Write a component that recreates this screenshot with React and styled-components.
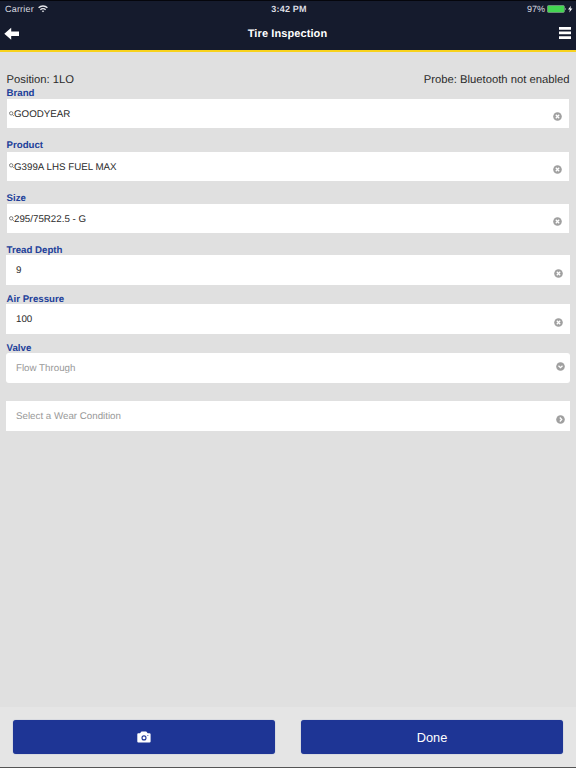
import React from "react";
import styled, { createGlobalStyle } from "styled-components";

const GlobalStyle = createGlobalStyle`
  * {
    box-sizing: border-box;
  }
  body {
    margin: 0;
    background-color: #e0e0e0;
    font-family: "Liberation Sans", Arial, sans-serif;
    text-rendering: geometricPrecision;
  }
  svg {
    display: block;
    flex: none;
  }
`;

const Page = styled.div`
  width: 100%;
  height: 100vh;
  display: flex;
  flex-direction: column;
  overflow: hidden;
  border-bottom: 1px solid #555;
`;

const Head = styled.header`
  height: 52px;
  flex: none;
  background-color: #151b2d;
  border-top: 1px solid #05060c;
  border-bottom: 2px solid #f8d21c;
  color: #fff;
`;

const StatusBar = styled.div`
  height: 15px;
  display: grid;
  grid-template-columns: 1fr auto 1fr;
  align-items: center;
  padding: 0 3px 0 5px;
  font-size: 9px;
  line-height: 14px;
  color: #dcdde2;
`;

const StatusSide = styled.div`
  display: flex;
  align-items: center;
  justify-content: ${(props) => (props.$end ? "flex-end" : "flex-start")};
  gap: ${(props) => (props.$end ? "2px" : "4px")};
`;

const StatusText = styled.span`
  font-weight: ${(props) => (props.$bold ? 700 : 400)};
  letter-spacing: ${(props) => props.$spacing || "0"};
`;

const NavBar = styled.div`
  height: 34px;
  display: grid;
  grid-template-columns: 1fr auto 1fr;
  align-items: center;
  padding: 1px 5px 0 4px;
`;

const Title = styled.h1`
  margin: 0;
  font-size: 11px;
  line-height: 14px;
  letter-spacing: 0.1px;
`;

const NavButton = styled.button`
  padding: 0 0 ${(props) => (props.$align === "end" ? 2 : 0)}px;
  border: 0;
  background: none;
  color: #fff;
  justify-self: ${(props) => props.$align};
`;

const Form = styled.main`
  flex: 1;
  padding: 20px 6px 0;
`;

const InfoRow = styled.div`
  display: flex;
  justify-content: space-between;
  height: 14px;
  padding: 0 0.5px;
  font-size: 11.25px;
  line-height: 16px;
  color: #2b2b2b;
`;

const Field = styled.div`
  margin-bottom: ${(props) => props.$gap}px;
`;

const Label = styled.label`
  display: block;
  height: ${(props) => props.$height}px;
  padding-left: 0.5px;
  font-size: 9.7px;
  font-weight: 700;
  line-height: 15px;
  color: #22409a;
`;

const Box = styled.div`
  display: flex;
  align-items: center;
  height: ${(props) => (props.$search ? 29 : 30)}px;
  margin: 0 ${(props) => (props.$search ? 1 : 0)}px;
  padding: 0 ${(props) => props.$right}px 0 ${(props) => (props.$search ? 1.5 : 10)}px;
  border-radius: ${(props) => (props.$rounded ? 3 : 0)}px;
  background-color: #fff;
  font-size: 9.75px;
  color: ${(props) => (props.$muted ? "#999" : "#2b2b2b")};
`;

const Value = styled.span`
  flex: 1;
  line-height: 14px;
  padding-top: ${(props) => (props.$tall ? 2 : 3)}px;
`;

const IconSlot = styled.span`
  padding-top: ${(props) => Math.max(props.$drop, 0) * 2}px;
  padding-bottom: ${(props) => Math.max(-props.$drop, 0) * 2}px;
`;

const Footer = styled.footer`
  height: 60px;
  flex: none;
  display: grid;
  grid-template-columns: 1fr 1fr;
  gap: 26px;
  padding: 13px 13px 0;
  background-color: #e5e5e5;
`;

const Button = styled.button`
  display: flex;
  align-items: center;
  justify-content: center;
  height: 34px;
  padding: 0;
  border: 0;
  border-radius: 3px;
  box-shadow: 0 0 1px #6478b8;
  background-color: #1e3595;
  color: #fff;
  font-family: inherit;
  font-size: 12.8px;
`;

const WifiIcon = () => (
  <svg width="10" height="8" viewBox="0 0 10 8" fill="none" stroke="#e8e9ee" strokeWidth="1.3">
    <path d="M0.6 2.8C3 0.4 7 0.4 9.4 2.8M2.4 4.7C3.8 3.3 6.2 3.3 7.6 4.7" />
    <path d="M5 7.3L3.7 5.9Q5 5 6.3 5.9Z" fill="#e8e9ee" stroke="none" />
  </svg>
);

const BatteryIcon = () => (
  <svg width="26" height="8" viewBox="0 0 26 8">
    <rect x="0.4" y="0.5" width="17" height="7" rx="1.2" fill="#43d551" stroke="#93a39c" strokeWidth="0.6" />
    <path d="M18.2 2.7Q19.6 4 18.2 5.3Z" fill="#e8e9ee" />
    <path d="M24 0.8L21 4.5H22.9L22.3 7.4L25.4 3.6H23.4Z" fill="#fff" />
  </svg>
);

const BackIcon = () => (
  <svg width="16" height="13" viewBox="0 0 16 13">
    <path d="M0.3 6.8L7.2 0.8V4.4H15V9H7.2V12.7Z" fill="currentColor" />
  </svg>
);

const MenuIcon = () => (
  <svg width="12" height="12" viewBox="0 0 12 12" fill="currentColor">
    <path d="M0 0H12V2.7H0ZM0 4.6H12V7.3H0ZM0 9.2H12V11.9H0Z" />
  </svg>
);

const SearchIcon = () => (
  <svg width="5.5" height="6" viewBox="0 0 5.5 6" fill="none" stroke="#666" strokeWidth="0.8">
    <circle cx="2.2" cy="2.3" r="1.7" />
    <path d="M3.4 3.5L5.2 5.3" />
  </svg>
);

const marks = {
  clear: "M2.8 2.8L6.2 6.2M6.2 2.8L2.8 6.2",
  down: "M2.5 3.8L4.5 5.7L6.5 3.8",
  right: "M3.8 2.5L5.7 4.5L3.8 6.5",
};

const CircleIcon = ({ type }) => (
  <svg width="9" height="9" viewBox="0 0 9 9">
    <circle cx="4.5" cy="4.5" r="4.3" fill="#a0a0a0" />
    <path d={marks[type]} fill="none" stroke="#fff" strokeWidth="1.3" />
  </svg>
);

const CameraIcon = () => (
  <svg width="14" height="12" viewBox="0 0 14 12">
    <path
      d="M1.2 2.2H3L4.5 0.5H9.2L10.7 2.2H12.5Q13.6 2.2 13.6 3.2V10.5Q13.6 11.6 12.5 11.6H1.3Q0.3 11.6 0.3 10.5V3.2Q0.3 2.2 1.2 2.2Z"
      fill="#fff"
    />
    <circle cx="7" cy="6.9" r="2" fill="none" stroke="#1e3595" strokeWidth="1.1" />
    <circle cx="10.9" cy="4.5" r="0.5" fill="#1e3595" />
  </svg>
);

const fields = [
  { label: "Brand", value: "GOODYEAR", search: true, labelHeight: 13, gap: 10, drop: 3, right: 7 },
  { label: "Product", value: "G399A LHS FUEL MAX", search: true, labelHeight: 13.5, gap: 10.5, drop: 3, right: 7 },
  { label: "Size", value: "295/75R22.5 - G", search: true, labelHeight: 13, gap: 10, drop: 3, right: 7 },
  { label: "Tread Depth", value: "9", labelHeight: 12, gap: 7, drop: 3, right: 7 },
  { label: "Air Pressure", value: "100", labelHeight: 12, gap: 7, drop: 3, right: 7 },
  { label: "Valve", value: "Flow Through", labelHeight: 11.5, gap: 18.5, drop: -1.5, right: 5.5, icon: "down", muted: true, rounded: true },
  { value: "Select a Wear Condition", gap: 0, drop: 3, right: 5.5, icon: "right", muted: true },
];

const App = () => {
  return (
    <Page>
      <GlobalStyle />
      <Head>
        <StatusBar>
          <StatusSide>
            <StatusText $spacing="0.2px">Carrier</StatusText>
            <WifiIcon />
          </StatusSide>
          <StatusText $bold $spacing="0.2px">3:42 PM</StatusText>
          <StatusSide $end>
            <StatusText>97%</StatusText>
            <BatteryIcon />
          </StatusSide>
        </StatusBar>
        <NavBar>
          <NavButton $align="start" aria-label="Back">
            <BackIcon />
          </NavButton>
          <Title>Tire Inspection</Title>
          <NavButton $align="end" aria-label="Menu">
            <MenuIcon />
          </NavButton>
        </NavBar>
      </Head>
      <Form>
        <InfoRow>
          <span>Position: 1LO</span>
          <span>Probe: Bluetooth not enabled</span>
        </InfoRow>
        {fields.map((field) => (
          <Field key={field.value} $gap={field.gap}>
            {field.label && <Label $height={field.labelHeight}>{field.label}</Label>}
            <Box $search={field.search} $right={field.right} $muted={field.muted} $rounded={field.rounded}>
              {field.search && <SearchIcon />}
              <Value $tall={!field.search}>{field.value}</Value>
              <IconSlot $drop={field.drop}>
                <CircleIcon type={field.icon || "clear"} />
              </IconSlot>
            </Box>
          </Field>
        ))}
      </Form>
      <Footer>
        <Button aria-label="Take photo">
          <CameraIcon />
        </Button>
        <Button>Done</Button>
      </Footer>
    </Page>
  );
};

export default App;
